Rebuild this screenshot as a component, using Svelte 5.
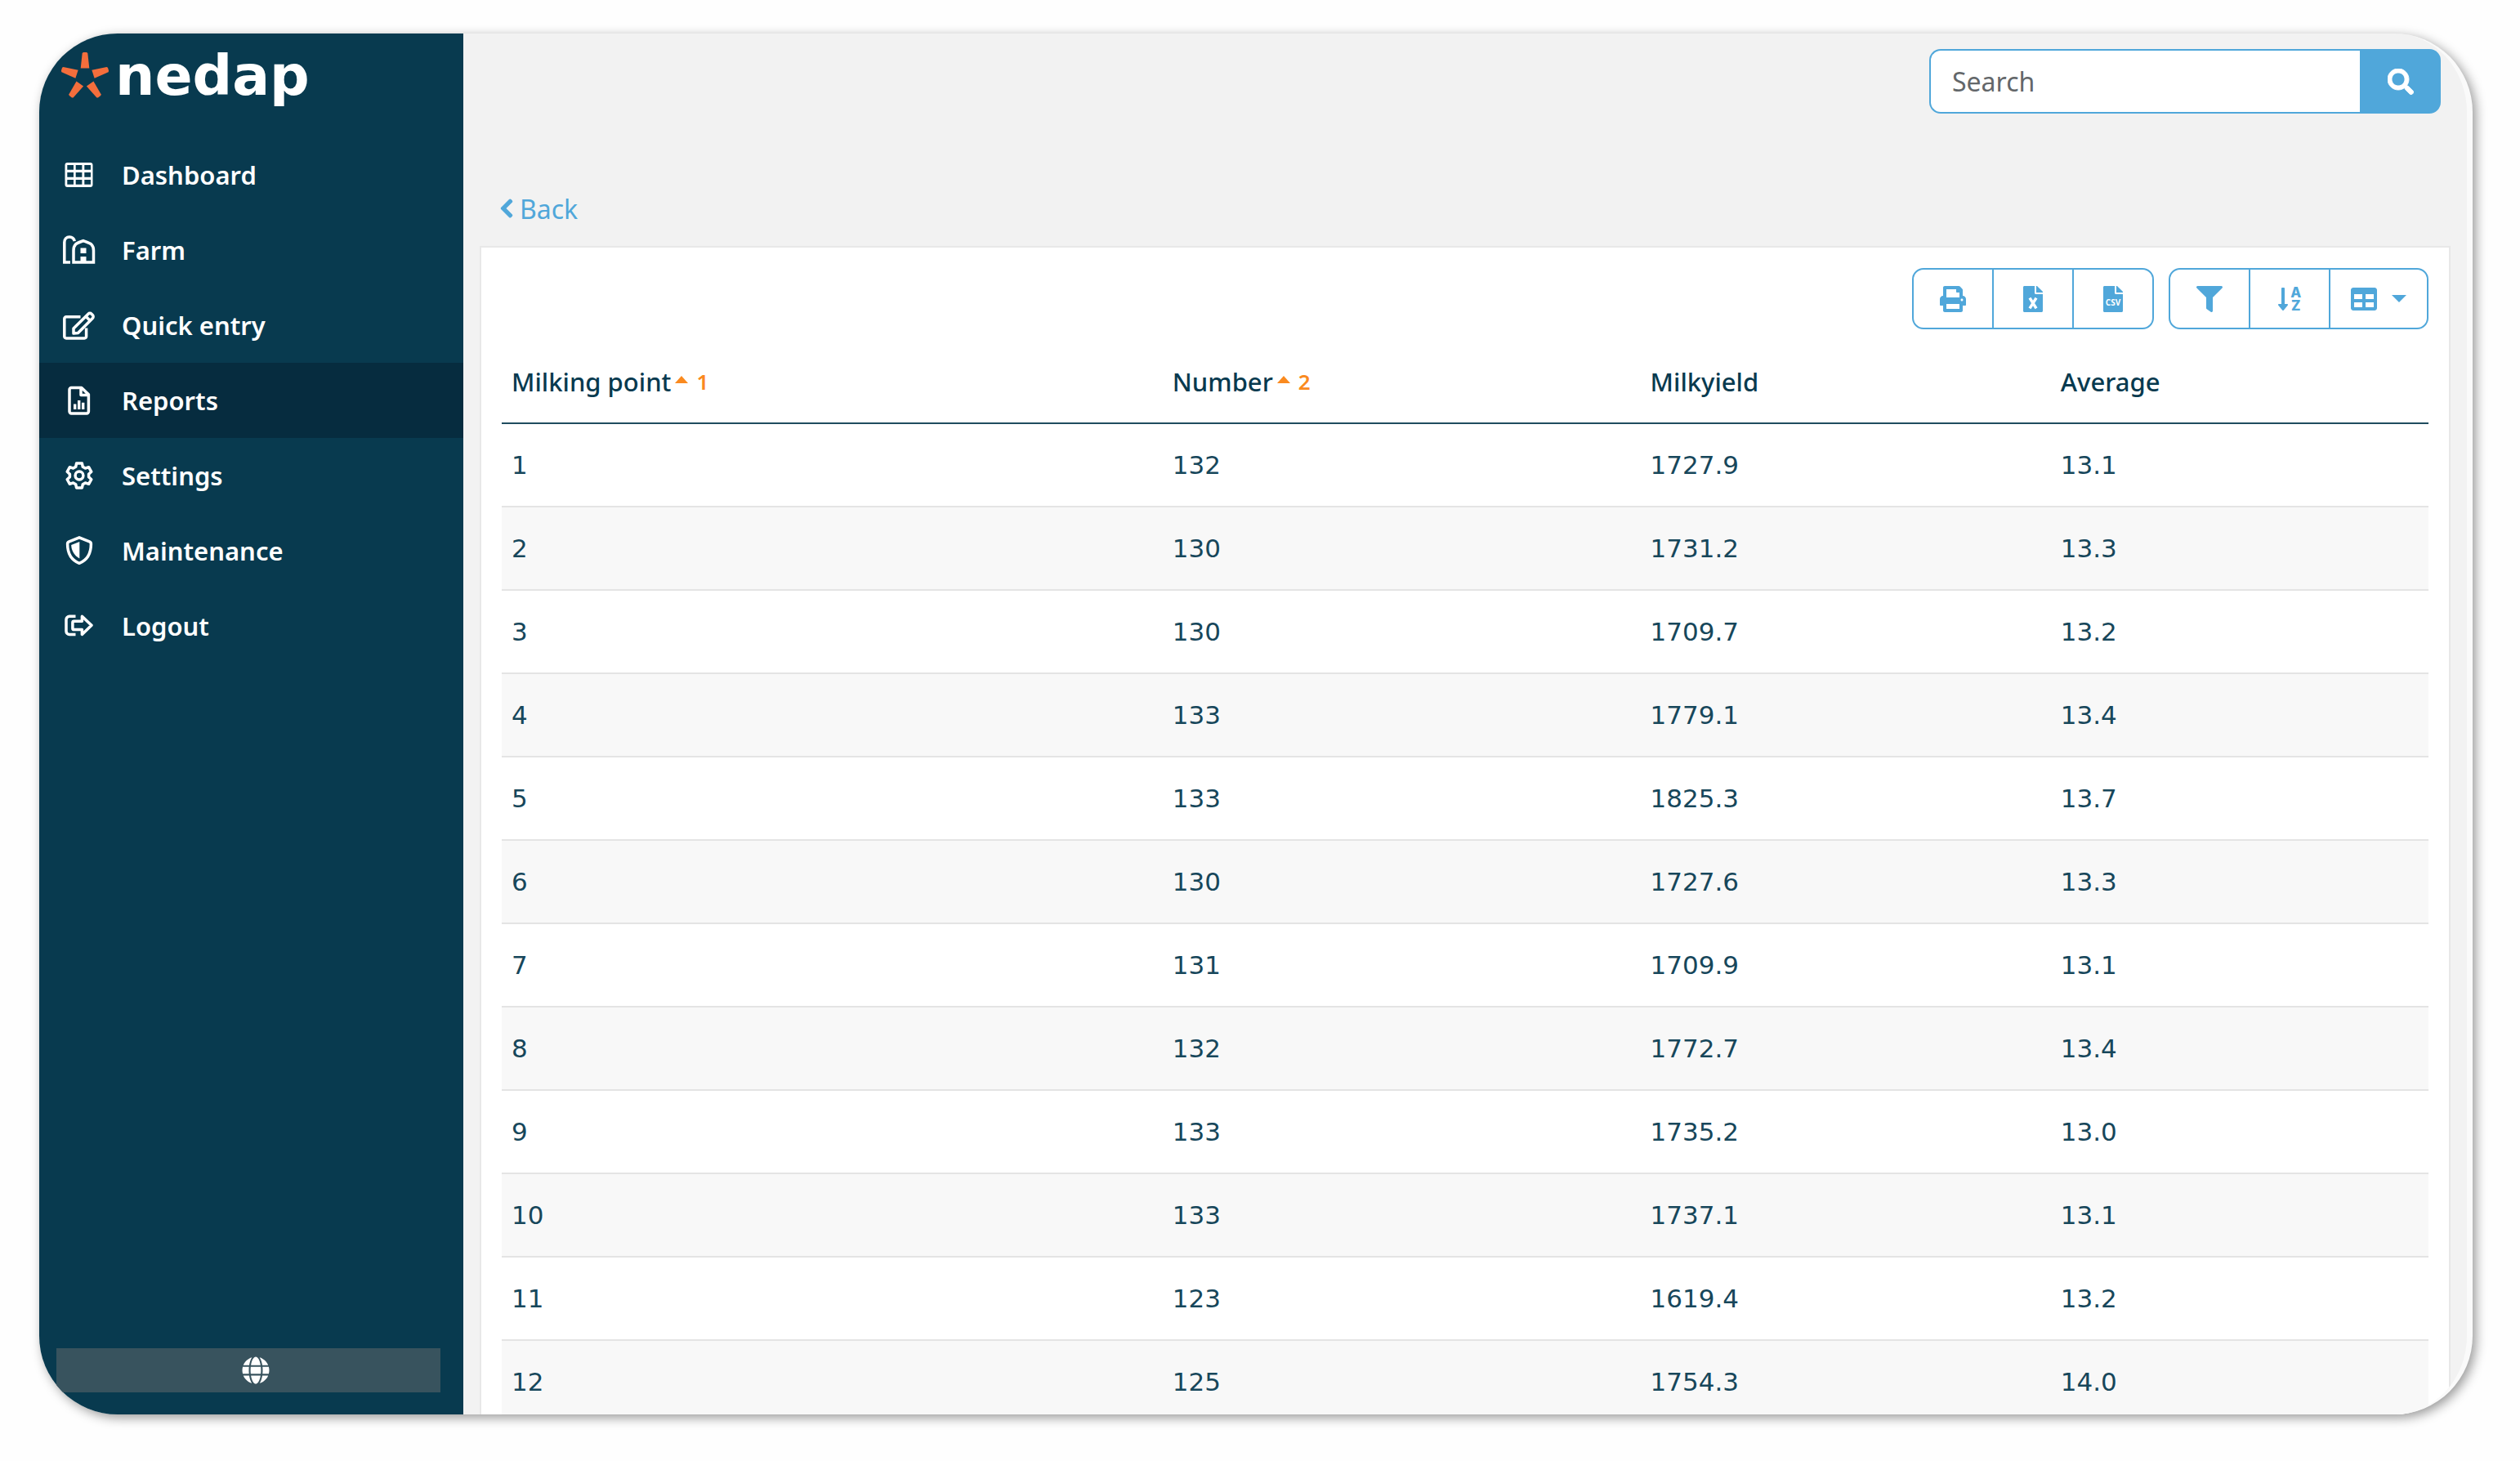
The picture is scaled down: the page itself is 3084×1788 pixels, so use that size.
<script>
  const menu = [
    { label: 'Dashboard', icon: 'dashboard' },
    { label: 'Farm', icon: 'farm' },
    { label: 'Quick entry', icon: 'edit' },
    { label: 'Reports', icon: 'report' },
    { label: 'Settings', icon: 'gear' },
    { label: 'Maintenance', icon: 'shield' },
    { label: 'Logout', icon: 'logout' }
  ];
  let active = $state('Reports');
  let query = $state('');

  const columns = [
    { label: 'Milking point', sort: 1 },
    { label: 'Number', sort: 2 },
    { label: 'Milkyield' },
    { label: 'Average' }
  ];

  const rows = [
    ['1', '132', '1727.9', '13.1'],
    ['2', '130', '1731.2', '13.3'],
    ['3', '130', '1709.7', '13.2'],
    ['4', '133', '1779.1', '13.4'],
    ['5', '133', '1825.3', '13.7'],
    ['6', '130', '1727.6', '13.3'],
    ['7', '131', '1709.9', '13.1'],
    ['8', '132', '1772.7', '13.4'],
    ['9', '133', '1735.2', '13.0'],
    ['10', '133', '1737.1', '13.1'],
    ['11', '123', '1619.4', '13.2'],
    ['12', '125', '1754.3', '14.0']
  ];

  const petals = [0, 72, 144, 216, 288];
</script>

{#snippet menuIcon(name)}
  <svg class="menu-icon" viewBox="0 0 40 40" fill="none" stroke="currentColor" stroke-width="3.5" stroke-linejoin="round" aria-hidden="true">
    {#if name === 'dashboard'}
      <path fill="currentColor" stroke="none" fill-rule="evenodd" d="M5.500 5h28a3 3 0 0 1 3 3v24a3 3 0 0 1-3 3h-28a3 3 0 0 1-3-3V8a3 3 0 0 1 3-3zM5.300 8v5.700h7.700V8zM15.700 8v5.700h7.700V8zM26.300 8v5.700h7.700V8zM5.300 17v5.700h7.700V17zM15.700 17v5.700h7.700V17zM26.300 17v5.700h7.700V17zM5.300 26v5.700h7.700V26zM15.700 26v5.700h7.700V26zM26.300 26v5.700h7.700V26z" />
    {:else if name === 'farm'}
      <path d="M9 35H1.800V10.500C1.800 6.500 4.500 4 8 4c3 0 5.500 1.800 6.300 5.200" stroke-linejoin="miter" />
      <path d="M13 35V20.500c0-3 .8-5.800 2.600-7.600 1.800-1.600 5.900-2.900 9.400-4.300 3.500 1.400 7.600 2.700 9.700 4.300 1.900 1.800 2.800 4.600 2.800 7.600V35z" stroke-linejoin="miter" />
      <path fill="currentColor" stroke="none" d="M21.500 17.500h7V24h-7zM21.500 28h7v7h-7z" />
    {:else if name === 'edit'}
      <path d="M21.500 9.800H4A2.200 2.200 0 0 0 1.800 12v21.800A2.200 2.200 0 0 0 4 36h22.400a2.200 2.200 0 0 0 2.200-2.200V23.500" />
      <path d="M13 30v-6L31 6.200a2.800 2.800 0 0 1 4 0l1.300 1.300a2.800 2.800 0 0 1 0 4L18.500 29.500z M28 9.200l5.400 5.400" />
    {:else if name === 'report'}
      <path d="M22.800 4.500H10.300A2.300 2.300 0 0 0 8 6.800v26.800a2.300 2.300 0 0 0 2.300 2.300h18.800a2.300 2.300 0 0 0 2.300-2.300V12.700zM22 4.500v9h9" />
      <path fill="currentColor" stroke="none" d="M13 24.500h3.400V31H13zM18 20h3.400v11H18zM23 22.700h3.400V31H23z" />
    {:else if name === 'gear'}
      <path d="M16.600 5h6.800l.9 4.300 3.100 1.800 4.200-1.400 3.200 5.600-3.200 2.900v3.600l3.200 2.900-3.200 5.600-4.200-1.400-3.100 1.800-.9 4.300h-6.800l-.9-4.300-3.100-1.800-4.200 1.400-3.200-5.600 3.200-2.900v-3.600l-3.200-2.900 3.200-5.600 4.200 1.400 3.100-1.800z" />
      <circle cx="20" cy="20" r="4.900" />
    {:else if name === 'shield'}
      <path d="M20 3.800l12.500 5a3 3 0 0 1 1.900 2.900c0 12-5.700 20.100-14.400 23.600C11.300 31.800 5.600 23.700 5.600 11.700a3 3 0 0 1 1.900-2.900z" />
      <path fill="currentColor" stroke="none" d="M20.300 9v20.500C14 26 10.300 20 10.200 13z" />
    {:else}
      <path d="M15.500 8.300H8A4 4 0 0 0 4 12.300v14.200a4 4 0 0 0 4 4h7.500" />
      <path d="M23.400 8.300L35 19.300 23.400 30.400V24.500H13.500a1.600 1.600 0 0 1-1.600-1.600v-7a1.600 1.600 0 0 1 1.600-1.600h9.900z" />
    {/if}
  </svg>
{/snippet}

<div class="page">
  <div class="frame">
    <aside class="sidebar">
      <div class="logo">
        <svg class="star" viewBox="0 0 58 58" aria-hidden="true">
          {#each petals as angle}
            <path d="M27 0h4l1.300 1 2 18.500H23.700l2-18.500z" transform="rotate({angle} 29 30)" />
          {/each}
        </svg>
        <span class="wordmark">nedap</span>
      </div>
      <nav class="menu" aria-label="Main">
        {#each menu as item}
          <a
            href="#{item.icon}"
            class="menu-item"
            class:active={active === item.label}
            onclick={() => (active = item.label)}
          >
            {@render menuIcon(item.icon)}
            <span>{item.label}</span>
          </a>
        {/each}
      </nav>
      <button class="language" aria-label="Language">
        <svg viewBox="0 0 496 512" aria-hidden="true">
          <path d="M336.500 160C322 70.700 287.800 8 248 8s-74 62.700-88.500 152h177zM152 256c0 22.200 1.200 43.500 3.300 64h185.300c2.100-20.500 3.300-41.800 3.300-64s-1.200-43.500-3.300-64H155.300c-2.100 20.500-3.300 41.800-3.300 64zm324.700-96c-28.600-67.900-86.500-120.400-158-141.600 24.400 33.800 41.200 84.700 50 141.600h108zM177.200 18.400C105.800 39.600 47.800 92.100 19.300 160h108c8.700-56.900 25.500-107.800 49.900-141.600zM487.400 192H372.700c2.100 21 3.300 42.500 3.300 64s-1.200 43-3.300 64h114.600c5.500-20.500 8.600-41.800 8.600-64s-3.100-43.500-8.500-64zM120 256c0-21.500 1.200-43 3.300-64H8.600C3.200 212.500 0 233.800 0 256s3.200 43.500 8.600 64h114.600c-2-21-3.200-42.500-3.200-64zm39.500 96c14.500 89.300 48.700 152 88.500 152s74-62.700 88.500-152h-177zm159.300 141.600c71.400-21.200 129.400-73.700 158-141.600h-108c-8.800 56.900-25.600 107.800-50 141.600zM19.300 352c28.600 67.900 86.500 120.400 158 141.600-24.400-33.800-41.200-84.700-50-141.600h-108z" />
        </svg>
      </button>
    </aside>

    <main class="main">
      <form class="search" role="search" onsubmit={(e) => e.preventDefault()}>
        <input type="text" placeholder="Search" aria-label="Search" bind:value={query} />
        <button aria-label="Run search">
          <svg viewBox="0 0 512 512" aria-hidden="true">
            <path d="M505 442.700L405.300 343c-4.500-4.500-10.600-7-17-7H372c27.600-35.300 44-79.700 44-128C416 93.100 322.900 0 208 0S0 93.100 0 208s93.100 208 208 208c48.300 0 92.700-16.400 128-44v16.300c0 6.400 2.500 12.500 7 17l99.700 99.700c9.400 9.400 24.600 9.400 33.900 0l28.300-28.300c9.400-9.400 9.400-24.600.1-34zM208 336c-70.700 0-128-57.200-128-128 0-70.700 57.200-128 128-128 70.700 0 128 57.200 128 128 0 70.700-57.200 128-128 128z" />
          </svg>
        </button>
      </form>

      <a class="back" href="#back">
        <svg viewBox="0 0 320 512" aria-hidden="true">
          <path d="M34.520 239.030L228.870 44.690c9.370-9.370 24.570-9.370 33.940 0l22.670 22.670c9.360 9.360 9.370 24.520.04 33.900L131.490 256l154.020 154.750c9.340 9.380 9.320 24.540-.04 33.900l-22.670 22.670c-9.370 9.370-24.570 9.370-33.940 0L34.520 272.970c-9.370-9.370-9.370-24.570 0-33.940z" />
        </svg>
        Back
      </a>

      <section class="card">
        <div class="toolbar">
          <div class="group">
            <button aria-label="Print">
              <svg viewBox="0 0 512 512" aria-hidden="true">
                <path d="M448 192V77.250c0-8.490-3.370-16.620-9.370-22.630L393.370 9.370c-6-6-14.140-9.370-22.630-9.370H96C78.330 0 64 14.330 64 32v160c-35.350 0-64 28.650-64 64v112c0 8.840 7.160 16 16 16h48v96c0 17.670 14.330 32 32 32h320c17.670 0 32-14.330 32-32v-96h48c8.840 0 16-7.160 16-16V256c0-35.350-28.650-64-64-64zm-64 256H128v-96h256v96zm0-224H128V64h192v48c0 8.840 7.160 16 16 16h48v96zm48 72c-13.250 0-24-10.750-24-24 0-13.260 10.750-24 24-24s24 10.740 24 24c0 13.250-10.750 24-24 24z" />
              </svg>
            </button>
            <button aria-label="Export to Excel">
              <svg class="file" viewBox="0 0 384 512" aria-hidden="true">
                <path d="M224 136V0H24C10.700 0 0 10.700 0 24v464c0 13.300 10.700 24 24 24h336c13.300 0 24-10.700 24-24V160H248c-13.200 0-24-10.800-24-24zM384 121.900v6.100H256V0h6.100c6.400 0 12.500 2.500 17 7l97.900 98c4.500 4.500 7 10.600 7 16.900z" />
                <path class="mark" d="M128 234l128 204M256 234L128 438" />
              </svg>
            </button>
            <button aria-label="Export to CSV">
              <svg class="file" viewBox="0 0 384 512" aria-hidden="true">
                <path d="M224 136V0H24C10.700 0 0 10.700 0 24v464c0 13.300 10.700 24 24 24h336c13.300 0 24-10.700 24-24V160H248c-13.200 0-24-10.800-24-24zM384 121.900v6.100H256V0h6.100c6.400 0 12.500 2.500 17 7l97.900 98c4.500 4.500 7 10.600 7 16.900z" />
                <text class="csv" x="192" y="382" text-anchor="middle">CSV</text>
              </svg>
            </button>
          </div>
          <div class="group">
            <button aria-label="Filter">
              <svg viewBox="0 0 512 512" aria-hidden="true">
                <path d="M487.976 0H24.028C2.710 0-8.047 25.866 7.058 40.971L192 225.941V432c0 7.831 3.821 15.170 10.237 19.662l80 55.980C298.020 518.690 320 507.493 320 487.980V225.941l184.947-184.970C520.021 25.896 509.338 0 487.976 0z" />
              </svg>
            </button>
            <button aria-label="Sort">
              <svg class="sort" viewBox="0 0 448 512" aria-hidden="true">
                <path d="M176 352h-48V48a16 16 0 0 0-16-16H80a16 16 0 0 0-16 16v304H16c-14.190 0-21.360 17.240-11.290 27.310l80 96a16 16 0 0 0 22.620 0l80-96C197.350 369.260 190.220 352 176 352z" />
                <text x="348" y="222" text-anchor="middle">A</text>
                <text x="348" y="480" text-anchor="middle">Z</text>
              </svg>
            </button>
            <button class="wide" aria-label="Columns" aria-haspopup="menu">
              <svg viewBox="0 0 512 512" aria-hidden="true">
                <path d="M464 32H48C21.490 32 0 53.490 0 80v352c0 26.510 21.490 48 48 48h416c26.510 0 48-21.490 48-48V80c0-26.510-21.490-48-48-48zM224 416H64v-96h160v96zm0-160H64v-96h160v96zm224 160H288v-96h160v96zm0-160H288v-96h160v96z" />
              </svg>
              <span class="caret"></span>
            </button>
          </div>
        </div>

        <table>
          <colgroup>
            <col class="c-point" />
            <col class="c-number" />
            <col class="c-yield" />
            <col />
          </colgroup>
          <thead>
            <tr>
              {#each columns as col}
                <th scope="col">
                  <span class="head">
                    {col.label}{#if col.sort}<span class="sort-caret"></span><span class="sort-rank">{col.sort}</span>{/if}
                  </span>
                </th>
              {/each}
            </tr>
          </thead>
          <tbody>
            {#each rows as row}
              <tr>
                {#each row as value}
                  <td>{value}</td>
                {/each}
              </tr>
            {/each}
          </tbody>
        </table>
      </section>
    </main>
  </div>
</div>

<style>
  :global(body) {
    background: #fefefe;
  }

  .page {
    box-sizing: border-box;
    height: 100vh;
    padding: 41px 58px 57px 48px;
    font-family: 'Noto Sans', 'Open Sans', sans-serif;
    font-size: 32px;
    color: #083a4f;
  }

  .page *,
  .page *::before {
    box-sizing: border-box;
  }

  .frame {
    display: flex;
    height: 100%;
    overflow: hidden;
    border-radius: 96px;
    background: #f2f2f2;
    border-right: 7px solid #fafafa;
    box-shadow: 4px 4px 14px rgba(0, 0, 0, 0.4);
  }

  .sidebar {
    flex: 0 0 519px;
    display: flex;
    flex-direction: column;
    background: #083a4f;
    color: #fff;
  }

  .logo {
    display: flex;
    flex-shrink: 0;
    align-items: center;
    gap: 8px;
    height: 127px;
    padding: 0 0 24px 27px;
  }

  .star {
    width: 58px;
    height: 58px;
    fill: #f46e3c;
  }

  .wordmark {
    font-family: 'DejaVu Sans', sans-serif;
    font-weight: 700;
    font-size: 68px;
    line-height: 72px;
  }

  .menu {
    display: flex;
    flex-direction: column;
    flex: 1;
  }

  .menu-item {
    display: flex;
    align-items: center;
    gap: 32px;
    height: 92px;
    padding-left: 29px;
    color: inherit;
    font-size: 31px;
    font-weight: 600;
    text-decoration: none;
  }

  .menu-item.active {
    background: #062c3f;
  }

  .menu-icon {
    width: 40px;
    height: 40px;
  }

  .language {
    display: flex;
    flex-shrink: 0;
    align-items: center;
    justify-content: center;
    height: 54px;
    margin: 0 28px 27px 21px;
    padding: 0 0 0 18px;
    border: 0;
    background: #38535e;
  }

  .language svg {
    width: 34px;
    height: 34px;
    fill: #fff;
  }

  .main {
    flex: 1;
    min-width: 0;
    display: flex;
    flex-direction: column;
    padding: 19px 20px 0 20px;
  }

  .main > * {
    flex-shrink: 0;
  }

  .search {
    display: flex;
    align-self: flex-end;
    width: 626px;
    height: 79px;
    margin-right: 12px;
  }

  .search input {
    flex: 1;
    min-width: 0;
    padding: 0 26px;
    border: 2px solid #50a7da;
    border-right: 0;
    border-radius: 14px 0 0 14px;
    background: #fff;
    color: #083a4f;
    font: inherit;
  }

  .search input::placeholder {
    color: #63676a;
    opacity: 1;
  }

  .search button {
    display: flex;
    align-items: center;
    justify-content: center;
    width: 99px;
    padding: 0;
    border: 0;
    border-radius: 0 14px 14px 0;
    background: #50a7da;
  }

  .search svg {
    width: 32px;
    height: 32px;
    fill: #fff;
    stroke: #fff;
    stroke-width: 14;
  }

  .back {
    display: flex;
    align-items: center;
    align-self: flex-start;
    gap: 8px;
    height: 44px;
    margin: 94px 0 24px 25px;
    color: #50a7da;
    text-decoration: none;
  }

  .back svg {
    width: 16px;
    height: 26px;
    fill: currentColor;
    stroke: currentColor;
    stroke-width: 24;
  }

  .card {
    padding: 25px;
    border: 2px solid #e8e8e8;
    background: #fff;
  }

  .toolbar {
    display: flex;
    justify-content: flex-end;
    gap: 18px;
    margin-bottom: 14px;
  }

  .group {
    display: flex;
    height: 75px;
    border: 2px solid #50a7da;
    border-radius: 14px;
  }

  .group button {
    display: flex;
    align-items: center;
    justify-content: center;
    width: 96px;
    padding: 0;
    border: 0;
    background: none;
    color: #50a7da;
  }

  .group button + button {
    width: 98px;
    border-left: 2px solid #50a7da;
  }

  .group button.wide {
    width: 120px;
    gap: 18px;
  }

  .group svg {
    width: 32px;
    height: 32px;
    overflow: visible;
    fill: currentColor;
  }

  .group svg.file {
    width: 24px;
  }

  .group svg.sort {
    width: 28px;
  }

  .mark {
    fill: none;
    stroke: #fff;
    stroke-width: 56;
  }

  .csv {
    fill: #fff;
    font: 700 160px 'Open Sans', sans-serif;
  }

  .sort text {
    font: 800 270px Inter, sans-serif;
  }

  .caret {
    border: 9px solid transparent;
    border-top-color: #50a7da;
    border-bottom: 0;
  }

  table {
    width: 100%;
    table-layout: fixed;
    border-collapse: separate;
    border-spacing: 0;
  }

  .c-point {
    width: 34.300%;
  }

  .c-number {
    width: 24.800%;
  }

  .c-yield {
    width: 21.300%;
  }

  th,
  td {
    height: 102px;
    padding: 0 12px;
    font-size: 31px;
    text-align: left;
    vertical-align: middle;
  }

  th {
    border-bottom: 2px solid #1f4c5f;
    font-weight: 500;
  }

  td {
    border-bottom: 2px solid #e4e4e4;
    color: #17475b;
    font-family: 'DejaVu Sans', sans-serif;
  }

  tbody tr:nth-child(even) {
    background: #f8f8f8;
  }

  .head {
    display: flex;
    align-items: center;
  }

  .sort-caret {
    margin: 0 10px 6px 5px;
    border: 8px solid transparent;
    border-bottom: 9px solid #fa8a1f;
    border-top: 0;
  }

  .sort-rank {
    color: #fa8a1f;
    font-size: 26px;
    font-weight: 600;
  }
</style>
